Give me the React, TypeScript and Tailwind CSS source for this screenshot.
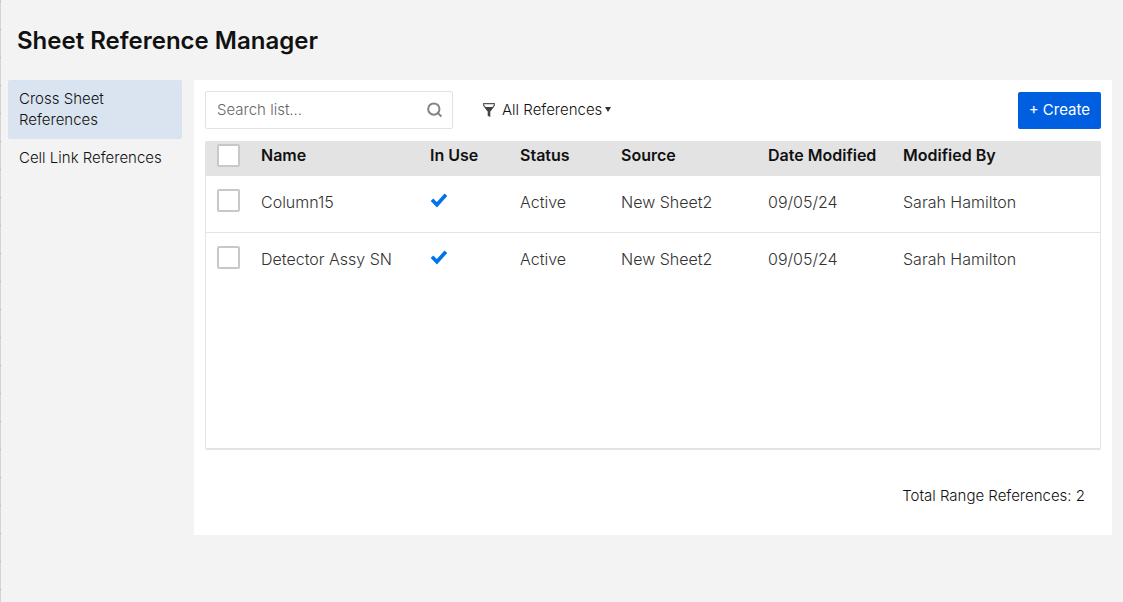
import React from "react";

type Reference = {
  name: string;
  status: string;
  source: string;
  modified: string;
  modifiedBy: string;
};

const references: Reference[] = [
  { name: "Column15", status: "Active", source: "New Sheet2", modified: "09/05/24", modifiedBy: "Sarah Hamilton" },
  { name: "Detector Assy SN", status: "Active", source: "New Sheet2", modified: "09/05/24", modifiedBy: "Sarah Hamilton" },
];

function SearchIcon() {
  return (
    <svg width="17" height="17" viewBox="0 0 17 17" fill="none" stroke="#858585" strokeWidth="2.2" aria-hidden="true">
      <circle cx="7.5" cy="8" r="6.2" />
      <path d="M12 12.500 15.800 16.300" />
    </svg>
  );
}

function FilterIcon() {
  return (
    <svg width="12" height="14" viewBox="0 0 12 14" aria-hidden="true">
      <path d="M.6 .6h10.800v1.600L7.400 7.500h-2.800L.6 2.200z" fill="#fff" stroke="#555" strokeWidth="1.100" />
      <path d="M1.400 4h9.200L7.300 8.500V14l-2.600-1.200V8.500z" fill="#444" />
    </svg>
  );
}

function InUseIcon() {
  return (
    <svg width="18" height="16" viewBox="0 0 18 16" fill="none" role="img" aria-label="In use">
      <path d="M2 7.800 6.900 12.700 15.900 2.700" stroke="#0073ec" strokeWidth="3.700" />
    </svg>
  );
}

function Checkbox({ label }: { label: string }) {
  return (
    <input
      type="checkbox"
      aria-label={label}
      className="block size-[23px] appearance-none rounded-xs border-2 border-[#c8c8c8] bg-white checked:bg-[#005ee0]"
    />
  );
}

export default function App() {
  return (
    <div className="flex min-h-screen bg-[#f3f3f3] font-['Inter',sans-serif] text-[15px] leading-[21px] font-light text-[#111]">
      {/* Edge of the sheet grid behind the dialog, with a tick at each row line */}
      <div
        aria-hidden="true"
        className="w-px shrink-0 bg-[repeating-linear-gradient(to_bottom,#d4d4d4_0px,#d4d4d4_1px,#b4b4b4_1px,#b4b4b4_2px,#d4d4d4_2px,#d4d4d4_28px)]"
      />
      <div className="min-w-0 grow pr-[11px] pb-8 pl-[7px]">
        <h1 className="px-[9px] pt-[25px] pb-[23px] text-2xl leading-8 font-semibold">Sheet Reference Manager</h1>

        <div className="flex items-start gap-3">
          <nav className="w-[174px] shrink-0">
            <a href="#cross-sheet" aria-current="page" className="block rounded-xs bg-[#dae4f0] pt-2 pr-8 pb-[9px] pl-[11px]">
              Cross Sheet References
            </a>
            <a href="#cell-link" className="block py-2 pl-[11px] whitespace-nowrap">
              Cell Link References
            </a>
          </nav>

          <main className="min-w-0 grow bg-white p-[11px] pb-[29px]">
            <div className="mb-3 flex items-center">
              <label className="flex h-[38px] w-[248px] items-center rounded-xs border border-[#e2e2e2] pr-[10px] pb-px pl-[11px]">
                <input
                  type="text"
                  aria-label="Search list"
                  placeholder="Search list..."
                  className="min-w-0 grow bg-transparent outline-none placeholder:text-[#666]"
                />
                <SearchIcon />
              </label>
              <button type="button" className="ml-[30px] flex items-center pb-px">
                <FilterIcon />
                <span className="ml-[7px]">All References</span>
                <svg width="6" height="5" viewBox="0 0 6 5" className="ml-[3px]" aria-hidden="true">
                  <path d="M0 0h6L3 5z" fill="#333" />
                </svg>
              </button>
              <button type="button" className="ml-auto h-[37px] rounded-xs bg-[#005ee0] px-[11px] pb-px font-normal text-white">
                + Create
              </button>
            </div>

            <div className="min-h-[309px] rounded-xs border border-t-0 border-b-2 border-[#e3e3e3]">
              <table className="w-full table-fixed text-left text-base leading-[21px]">
                <colgroup>
                  <col className="w-11" />
                  <col className="w-[169px]" />
                  <col className="w-[90px]" />
                  <col className="w-[101px]" />
                  <col className="w-[147px]" />
                  <col className="w-[135px]" />
                  <col />
                </colgroup>
                <thead className="bg-[#e3e3e3]">
                  <tr className="h-[35px] align-top [&>th]:pt-1 [&>th]:pl-[11px] [&>th]:font-semibold">
                    <td className="pt-[3px] pl-[11px]">
                      <Checkbox label="Select all references" />
                    </td>
                    <th>Name</th>
                    <th>In Use</th>
                    <th>Status</th>
                    <th>Source</th>
                    <th>Date Modified</th>
                    <th>Modified By</th>
                  </tr>
                </thead>
                <tbody className="text-[#333]">
                  {references.map((r) => (
                    <tr
                      key={r.name}
                      className="h-14 border-b border-[#e3e3e3] align-top last:border-b-0 [&>td]:pt-4 [&>td]:pl-[11px]"
                    >
                      <td>
                        <div className="-mt-[3px]">
                          <Checkbox label={`Select ${r.name}`} />
                        </div>
                      </td>
                      <td>{r.name}</td>
                      <td>
                        <InUseIcon />
                      </td>
                      <td>{r.status}</td>
                      <td>{r.source}</td>
                      <td>{r.modified}</td>
                      <td>{r.modifiedBy}</td>
                    </tr>
                  ))}
                </tbody>
              </table>
            </div>

            <p className="mt-[35px] pr-4 text-right">Total Range References: 2</p>
          </main>
        </div>
      </div>
    </div>
  );
}
